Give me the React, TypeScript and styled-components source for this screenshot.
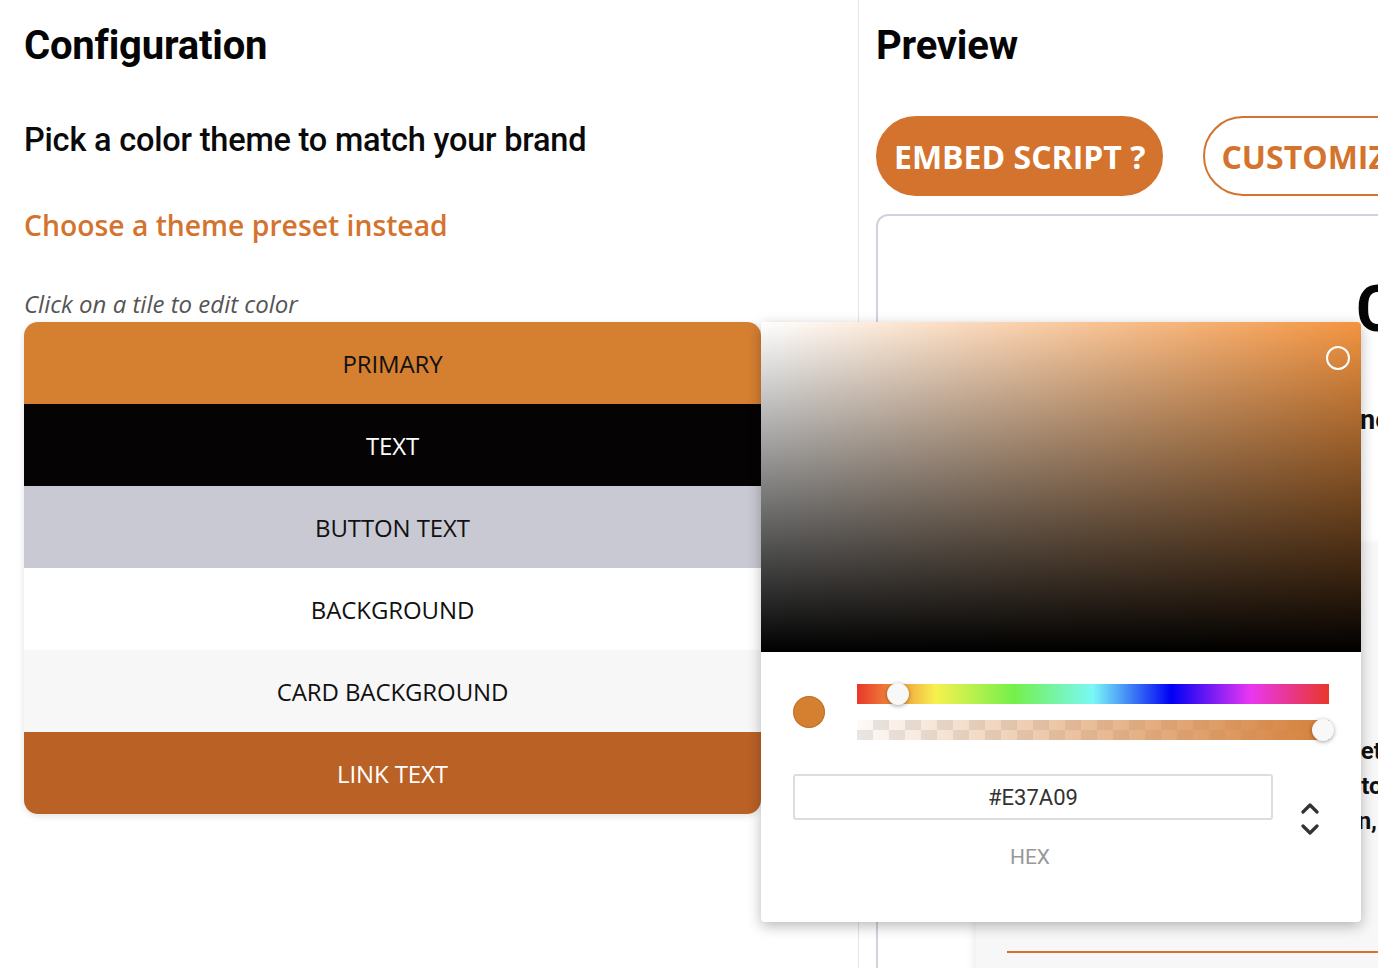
import styled, { createGlobalStyle } from 'styled-components'

const GlobalStyle = createGlobalStyle`
    html, body {
        margin: 0;
        padding: 0;
        overflow: hidden;
        background: #ffffff;
        font-family: Roboto, 'Liberation Sans', sans-serif;
    }
`

const Page = styled.div`
    display: flex;
    height: 968px;
`
const ConfigColumn = styled.section`
    width: 859px;
    flex-shrink: 0;
    border-right: 1px solid #e4e4e4;
    padding-left: 24px;
    box-sizing: border-box;
`
const PreviewColumn = styled.section`
    flex: 1;
    min-width: 0;
    padding-left: 17px;
`
const Title = styled.h1`
    margin: 0;
    padding-top: 22px;
    font-size: 40px;
    line-height: 48px;
    font-weight: 700;
    color: #050505;
    letter-spacing: -0.2px;
`
const Subtitle = styled.h2`
    margin: 50px 0 0;
    font-size: 32.5px;
    line-height: 40px;
    font-weight: 500;
    color: #0a0a0a;
    letter-spacing: -0.2px;
`
const PresetLink = styled.a`
    display: block;
    margin-top: 45px;
    font-family: 'Open Sans', sans-serif;
    font-weight: 600;
    font-size: 28.3px;
    line-height: 40px;
    color: #d4732e;
    cursor: pointer;
`
const Hint = styled.p`
    margin: 44px 0 0;
    font-family: 'Open Sans', sans-serif;
    font-style: italic;
    font-size: 24px;
    line-height: 30px;
    color: #555555;
`
const TilesWrapper = styled.div`
    position: relative;
    width: 737px;
    margin-top: 3px;
`
const Tiles = styled.div`
    border-radius: 14px;
    overflow: hidden;
    box-shadow: 0 2px 6px rgba(0, 0, 0, 0.12);
`
const Tile = styled.div<{ $bg: string; $fg: string }>`
    height: 82px;
    display: flex;
    align-items: center;
    justify-content: center;
    background: ${(p) => p.$bg};
    color: ${(p) => p.$fg};
    font-family: 'Open Sans', sans-serif;
    font-size: 24px;
    letter-spacing: -0.1px;
    cursor: pointer;
`

const Picker = styled.div`
    position: absolute;
    left: 100%;
    top: 0;
    width: 600px;
    height: 600px;
    background: #ffffff;
    border-radius: 4px;
    box-shadow: 0 4px 14px rgba(0, 0, 0, 0.28);
    overflow: hidden;
`
const Saturation = styled.div`
    position: relative;
    height: 330px;
    background: linear-gradient(to top, #000000, rgba(0, 0, 0, 0)),
        linear-gradient(to right, #ffffff, #f39440);
`
const SatCursor = styled.span`
    position: absolute;
    left: 565px;
    top: 24px;
    width: 20px;
    height: 20px;
    border: 2px solid #ffffff;
    border-radius: 50%;
`
const Controls = styled.div`
    padding: 32px 32px 0;
`
const SliderRow = styled.div`
    display: flex;
    align-items: center;
    gap: 32px;
`
const Swatch = styled.span`
    width: 32px;
    height: 32px;
    border-radius: 50%;
    background: #d57f31;
    box-shadow: inset 0 0 0 1px rgba(120, 60, 0, 0.25);
    flex-shrink: 0;
`
const Sliders = styled.div`
    flex: 1;
    display: flex;
    flex-direction: column;
    gap: 16px;
`
const Track = styled.div<{ $kind: 'hue' | 'alpha' }>`
    position: relative;
    height: 20px;
    background: ${(p) =>
        p.$kind === 'hue'
            ? 'linear-gradient(to right, #e8372a 0%, #f7f14f 16.6%, #74f04b 33.3%, #7af8f7 50%, #0000f5 66.6%, #e937f1 83.3%, #e8372a 100%)'
            : `linear-gradient(to right, rgba(213,128,58,0), #d5803a),
               repeating-conic-gradient(#e8e6e4 0% 25%, #fdfaf7 0% 50%) 0 0 / 32px 20px`};
`
const Thumb = styled.span`
    position: absolute;
    top: 50%;
    width: 22px;
    height: 22px;
    margin: -11px 0 0 -11px;
    border-radius: 50%;
    background: #f8f8f8;
    box-shadow: 0 1px 4px rgba(0, 0, 0, 0.37);
`
const HexRow = styled.div`
    display: flex;
    margin-top: 34px;
`
const HexField = styled.div`
    width: 480px;
    display: flex;
    flex-direction: column;
    align-items: center;
`
const HexInput = styled.input`
    width: 100%;
    height: 46px;
    box-sizing: border-box;
    border: 2px solid #dddddd;
    border-radius: 3px;
    text-align: center;
    font-family: Roboto, sans-serif;
    font-size: 22px;
    color: #333333;
    outline: none;
`
const HexLabel = styled.span`
    margin-top: 25px;
    margin-left: -6px;
    font-size: 21px;
    line-height: 24px;
    color: #999999;
`
const Toggle = styled.div`
    display: flex;
    flex-direction: column;
    gap: 10px;
    margin: 28px 0 0 28px;
    cursor: pointer;
`

const ButtonRow = styled.div`
    display: flex;
    gap: 40px;
    margin-top: 46px;
    white-space: nowrap;
`
const PillButton = styled.button<{ $outline?: boolean }>`
    height: 80px;
    padding: 0 16px;
    border-radius: 40px;
    border: 2px solid #d4732e;
    background: ${(p) => (p.$outline ? '#ffffff' : '#d4732e')};
    color: ${(p) => (p.$outline ? '#d4732e' : '#ffffff')};
    font-family: 'Open Sans', sans-serif;
    font-weight: 700;
    font-size: 32px;
    flex-shrink: 0;
`
const PreviewFrame = styled.div`
    margin-top: 18px;
    width: 1200px;
    height: 900px;
    border: 2px solid #d2d2de;
    border-radius: 12px;
`
const Hero = styled.div`
    padding: 54px 0 0 478px;
    white-space: nowrap;
`
const HeroTitle = styled.h3`
    margin: 0;
    font-size: 64px;
    line-height: 80px;
    font-weight: 700;
    color: #050505;
`
const HeroText = styled.p`
    margin: 54px 0 0 4px;
    font-size: 27px;
    font-weight: 700;
    color: #111111;
`
const InnerCard = styled.div`
    margin: 108px 0 0 98px;
    height: 500px;
    background: #f7f7f7;
    box-shadow: -3px 0 8px rgba(0, 0, 0, 0.07);
    padding: 190px 0 0 31px;
`
const CardText = styled.p`
    margin: 0;
    width: 500px;
    font-size: 24px;
    line-height: 35px;
    font-weight: 700;
    color: #111111;
    white-space: nowrap;
`
const Field = styled.div`
    margin-top: 112px;
    width: 600px;
    border-bottom: 2px solid #d4732e;
`

const tiles = [
    { label: 'PRIMARY', bg: '#d57f31', fg: '#111111' },
    { label: 'TEXT', bg: '#050304', fg: '#ffffff' },
    { label: 'BUTTON TEXT', bg: '#c9c9d3', fg: '#111111' },
    { label: 'BACKGROUND', bg: '#ffffff', fg: '#111111' },
    { label: 'CARD BACKGROUND', bg: '#f7f7f7', fg: '#111111' },
    { label: 'LINK TEXT', bg: '#ba6126', fg: '#ffffff' },
]

const Chevron = ({ up }: { up?: boolean }) => (
    <svg width="18" height="12" viewBox="0 0 18 12">
        <polyline
            points={up ? '2,10 9,3 16,10' : '2,2 9,9 16,2'}
            fill="none"
            stroke="#333"
            strokeWidth="3.2"
            strokeLinecap="round"
            strokeLinejoin="round"
        />
    </svg>
)

const App = () => {
    return (
        <>
            <GlobalStyle />
            <Page>
                <ConfigColumn>
                    <Title>Configuration</Title>
                    <Subtitle>Pick a color theme to match your brand</Subtitle>
                    <PresetLink>Choose a theme preset instead</PresetLink>
                    <Hint>Click on a tile to edit color</Hint>
                    <TilesWrapper>
                        <Tiles>
                            {tiles.map((t) => (
                                <Tile key={t.label} $bg={t.bg} $fg={t.fg}>
                                    {t.label}
                                </Tile>
                            ))}
                        </Tiles>
                        <Picker>
                            <Saturation>
                                <SatCursor />
                            </Saturation>
                            <Controls>
                                <SliderRow>
                                    <Swatch />
                                    <Sliders>
                                        <Track $kind="hue">
                                            <Thumb style={{ left: '8.7%' }} />
                                        </Track>
                                        <Track $kind="alpha">
                                            <Thumb style={{ left: '98.7%' }} />
                                        </Track>
                                    </Sliders>
                                </SliderRow>
                                <HexRow>
                                    <HexField>
                                        <HexInput defaultValue="#E37A09" />
                                        <HexLabel>HEX</HexLabel>
                                    </HexField>
                                    <Toggle>
                                        <Chevron up />
                                        <Chevron />
                                    </Toggle>
                                </HexRow>
                            </Controls>
                        </Picker>
                    </TilesWrapper>
                </ConfigColumn>
                <PreviewColumn>
                    <Title>Preview</Title>
                    <ButtonRow>
                        <PillButton>EMBED SCRIPT ?</PillButton>
                        <PillButton $outline>CUSTOMIZE</PillButton>
                    </ButtonRow>
                    <PreviewFrame>
                        <Hero>
                            <HeroTitle>Contact us</HeroTitle>
                            <HeroText>need help? we are here</HeroText>
                        </Hero>
                        <InnerCard>
                            <CardText>Send us a message and we will get back to you (</CardText>
                            <CardText>as soon as possible, we promise to solve</CardText>
                            <CardText>your issue with care and attention, every time,</CardText>
                            <Field />
                        </InnerCard>
                    </PreviewFrame>
                </PreviewColumn>
            </Page>
        </>
    )
}

export default App
